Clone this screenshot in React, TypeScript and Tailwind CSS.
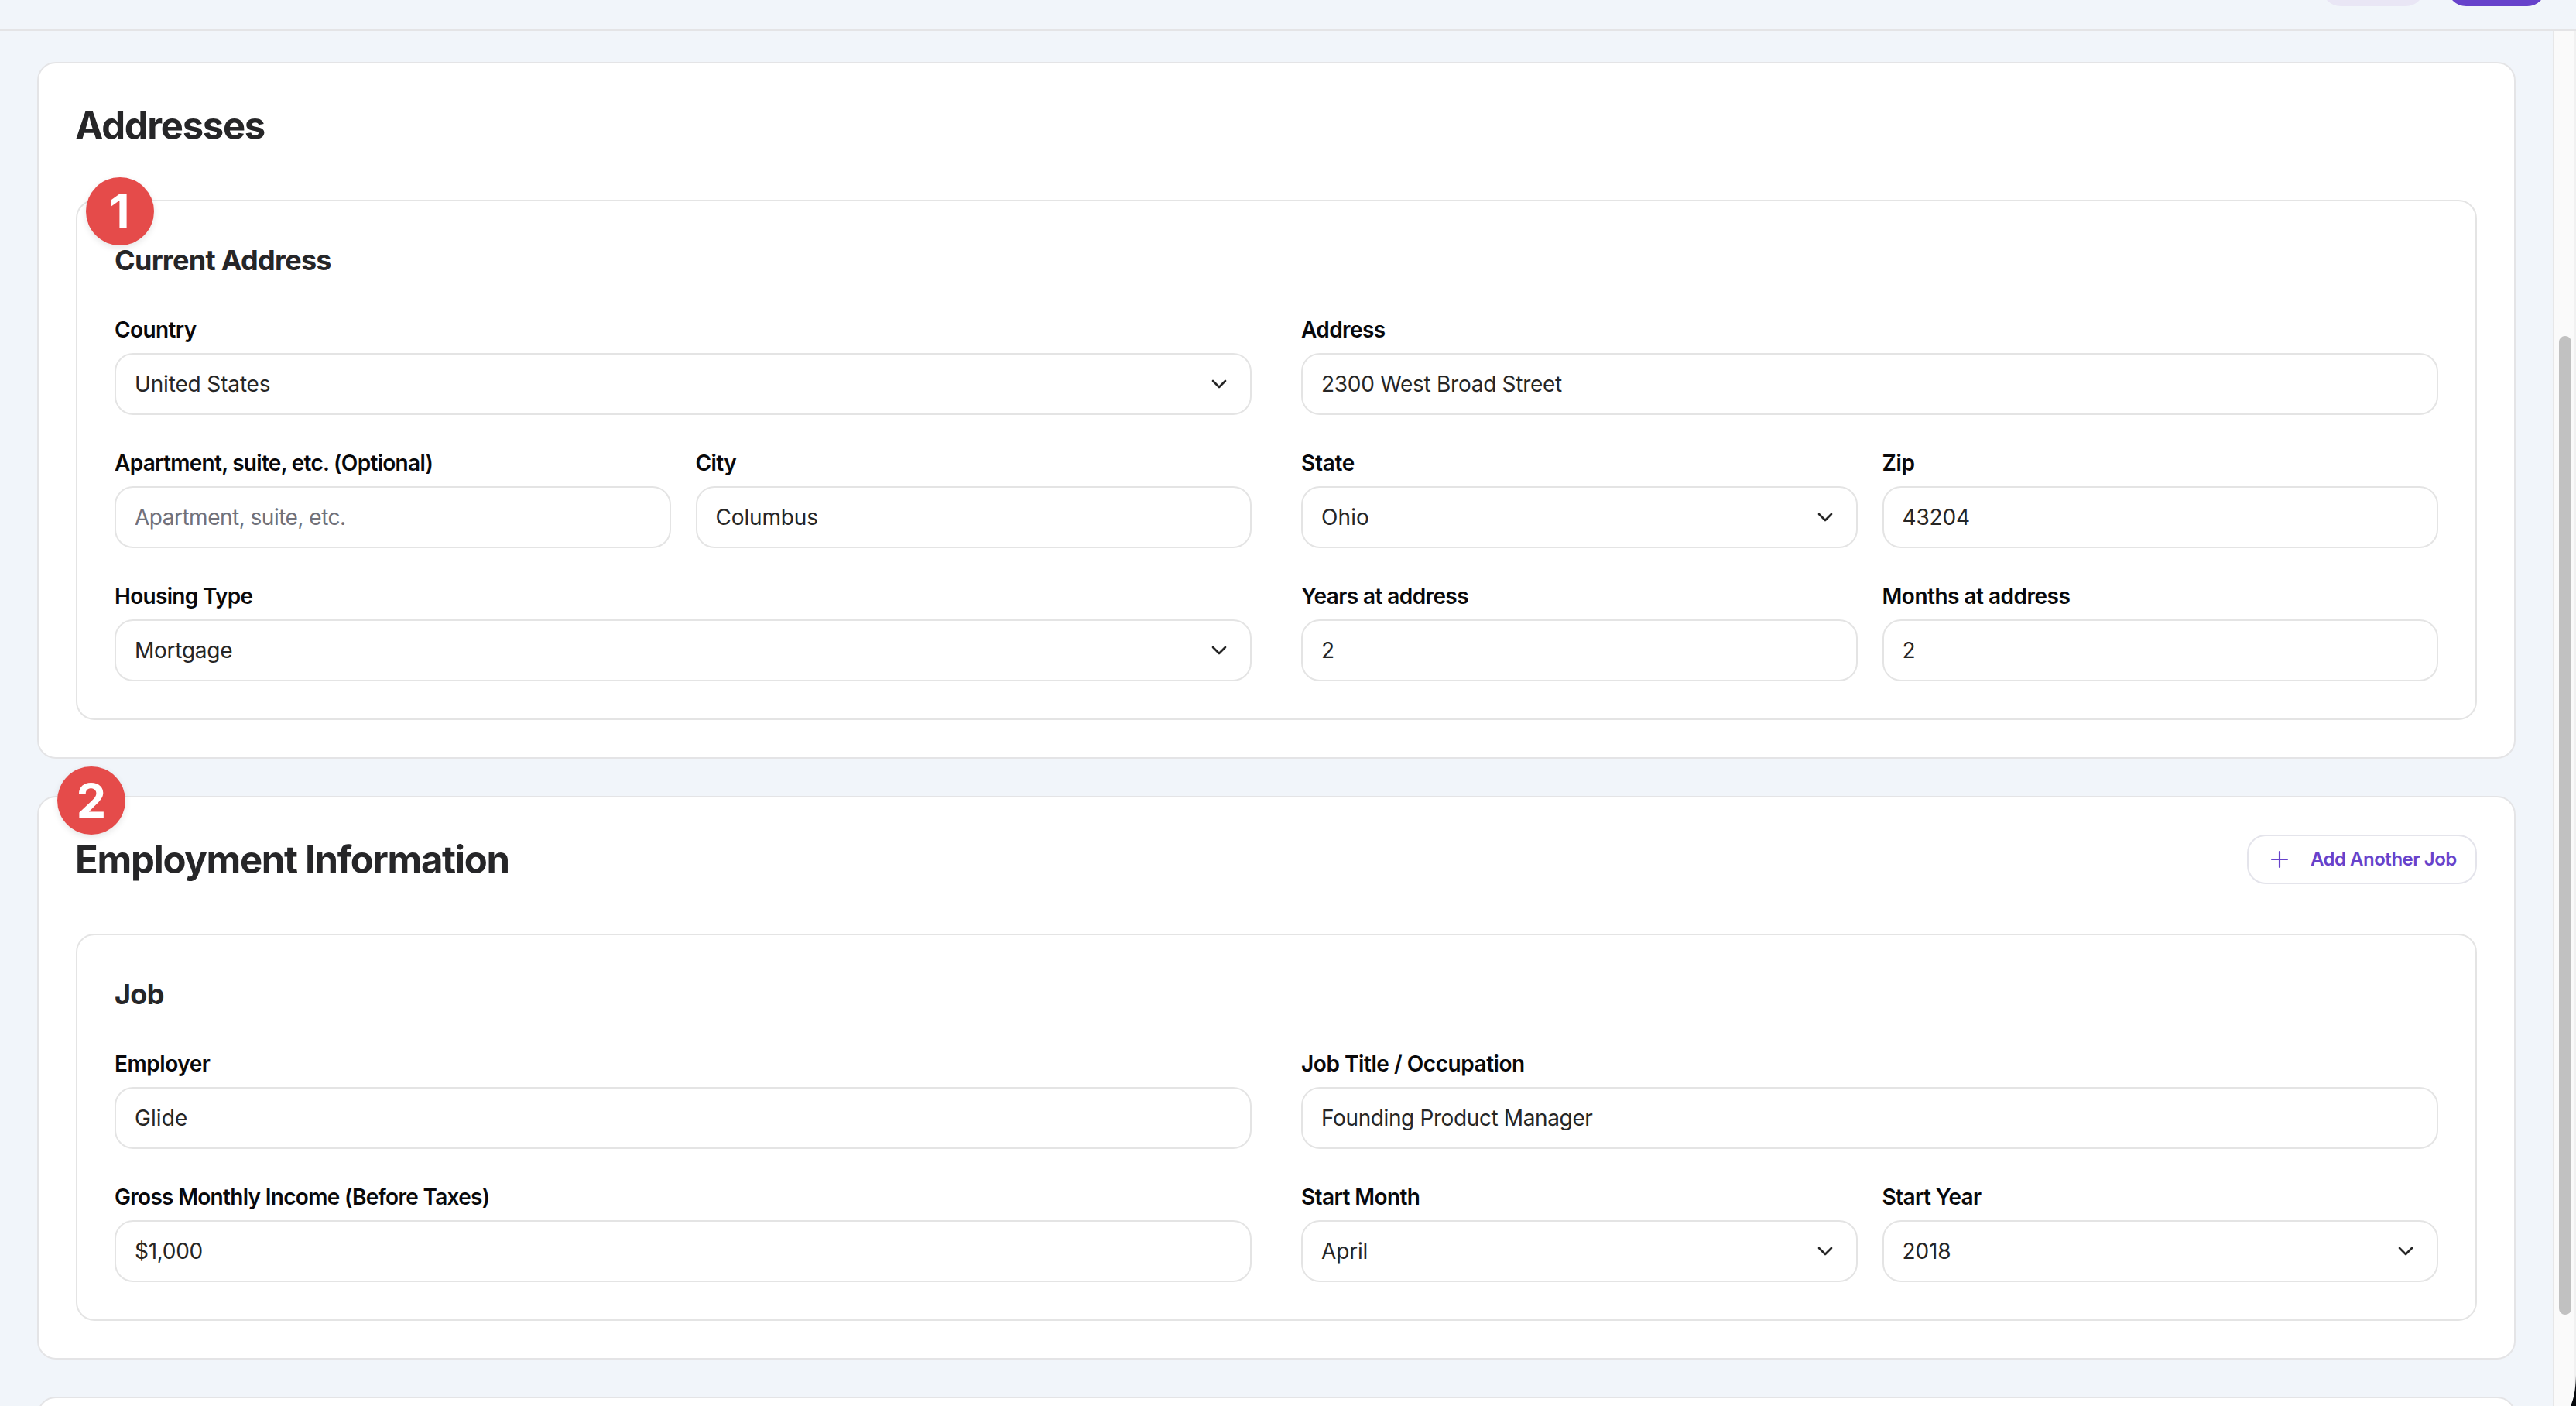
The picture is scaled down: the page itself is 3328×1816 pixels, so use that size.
import type { ReactNode } from "react";
import { ChevronDown } from "lucide-react";

type FieldProps = {
  label: string;
  value?: string;
  placeholder?: string;
  select?: boolean;
  labelTracking?: string;
  valueTracking?: string;
};

function Field({
  label,
  value,
  placeholder,
  select = false,
  labelTracking = "tracking-[-0.6px]",
  valueTracking = "tracking-[-0.15px]",
}: FieldProps) {
  return (
    <div className="flex min-w-0 flex-1 flex-col gap-4">
      <label className={`text-[28px] leading-none font-semibold whitespace-nowrap text-[#09090b] ${labelTracking}`}>
        {label}
      </label>
      <div className="flex h-20 items-center justify-between rounded-3xl border-2 border-[#e4e4e4] bg-white px-6 text-[28px] leading-10">
        {value ? (
          <span className={`text-[#262626] ${valueTracking}`}>{value}</span>
        ) : (
          <span className={`text-[#71717a] ${valueTracking}`}>{placeholder}</span>
        )}
        {select && <ChevronDown size={32} strokeWidth={2} className="text-[#262626]" />}
      </div>
    </div>
  );
}

function Pair({ children }: { children: ReactNode }) {
  return <div className="flex gap-8">{children}</div>;
}

function Badge({ n, className }: { n: number; className: string }) {
  return (
    <div
      className={`absolute flex size-[88px] items-center justify-center rounded-full bg-[#e54b4a] text-[61px] leading-none font-bold text-white shadow-[0_3px_8px_rgba(0,0,0,0.1)] ${className}`}
    >
      {n}
    </div>
  );
}

type SectionProps = { title: string; action?: ReactNode; badge?: ReactNode; children: ReactNode };

function Section({ title, action, badge, children }: SectionProps) {
  return (
    <section className="relative flex flex-col gap-16 rounded-3xl border-2 border-[#e4e4e6] bg-white p-12">
      <div className="flex h-16 items-center justify-between">
        <h2 className="-ml-px pt-px text-[49px] leading-[63px] font-bold tracking-[-1.3px] text-[#262628]">{title}</h2>
        {action}
      </div>
      {children}
      {badge}
    </section>
  );
}

function Panel({ title, badge, children }: { title: string; badge?: ReactNode; children: ReactNode }) {
  return (
    <div className="relative flex flex-col gap-12 rounded-3xl border-2 border-[#e4e4e4] p-12">
      <h3 className="text-[36px] leading-[56px] font-bold tracking-[-0.7px] text-[#262628]">{title}</h3>
      <div className="grid grid-cols-2 gap-x-16 gap-y-12">{children}</div>
      {badge}
    </div>
  );
}

export default function App() {
  return (
    <div className="relative flex h-[1816px] w-[3328px] flex-col overflow-hidden bg-[#f1f5fa] font-['Inter',sans-serif]">
      <header className="flex h-10 shrink-0 items-start justify-end gap-[30px] overflow-hidden border-b-2 border-[#e4e4e6] pr-[39px]">
        <div className="-mt-14 h-16 w-[132px] rounded-3xl bg-[#e9e6f5]" />
        <div className="-mt-14 h-16 w-[127px] rounded-3xl bg-[#6742cb]" />
      </header>

      <div className="flex min-h-0 flex-1">
        <main className="flex min-w-0 flex-1 flex-col gap-12 overflow-hidden pt-10 pr-12 pl-12">
          <Section title="Addresses">
            <Panel title="Current Address" badge={<Badge n={1} className="-top-[31px] left-[10.5px]" />}>
              <Field label="Country" value="United States" select />
              <Field label="Address" value="2300 West Broad Street" valueTracking="tracking-[-0.28px]" />
              <Pair>
                <Field
                  label="Apartment, suite, etc. (Optional)"
                  placeholder="Apartment, suite, etc."
                  labelTracking="tracking-[-0.7px]"
                  valueTracking="tracking-[-0.5px]"
                />
                <Field label="City" value="Columbus" />
              </Pair>
              <Pair>
                <Field label="State" value="Ohio" select labelTracking="tracking-[-0.3px]" valueTracking="tracking-[0.1px]" />
                <Field label="Zip" value="43204" labelTracking="tracking-[-0.3px]" />
              </Pair>
              <Field label="Housing Type" value="Mortgage" select labelTracking="tracking-[-0.7px]" valueTracking="tracking-[-0.25px]" />
              <Pair>
                <Field label="Years at address" value="2" />
                <Field label="Months at address" value="2" labelTracking="tracking-[-0.5px]" />
              </Pair>
            </Panel>
          </Section>

          <Section
            title="Employment Information"
            badge={<Badge n={2} className="-top-[40px] left-6" />}
            action={
              <button className="flex h-16 w-[297px] items-center gap-6 rounded-3xl border-2 border-[#e4e4eb] pl-6 text-[24px] font-semibold tracking-[-0.5px] whitespace-nowrap text-[#6742cb]">
                <svg viewBox="0 0 24 24" className="size-8 shrink-0" fill="none" stroke="currentColor" strokeWidth={1.6} strokeLinecap="round">
                  <path d="M12 4.5v15M4.5 12h15" />
                </svg>
                Add Another Job
              </button>
            }
          >
            <Panel title="Job">
              <Field label="Employer" value="Glide" labelTracking="tracking-[-0.45px]" valueTracking="tracking-[0.1px]" />
              <Field label="Job Title / Occupation" value="Founding Product Manager" labelTracking="tracking-[-0.45px]" valueTracking="tracking-[-0.38px]" />
              <Field label="Gross Monthly Income (Before Taxes)" value="$1,000" labelTracking="tracking-[-0.7px]" valueTracking="tracking-[-0.3px]" />
              <Pair>
                <Field label="Start Month" value="April" select />
                <Field label="Start Year" value="2018" select />
              </Pair>
            </Panel>
          </Section>

          <section className="h-40 shrink-0 rounded-3xl border-2 border-[#e4e4e6] bg-white" />
        </main>

        {/* Scrollbar track */}
        <div className="flex w-[30px] shrink-0 justify-center border-r-2 border-l-2 border-r-[#f1f1f1] border-l-[#e7e7e8] bg-[#fafafa] pt-[394px] pl-[2px]">
          <div className="h-[1264px] w-4 rounded-full bg-[#c1c1c1]" />
        </div>
      </div>

      {/* Rounded window corner */}
      <svg viewBox="0 0 12 48" className="absolute right-0 bottom-0 h-12 w-3">
        <path d="M12 8 C11.6 26 9.5 38 5 48 H12 Z" fill="#05080c" />
      </svg>
    </div>
  );
}
